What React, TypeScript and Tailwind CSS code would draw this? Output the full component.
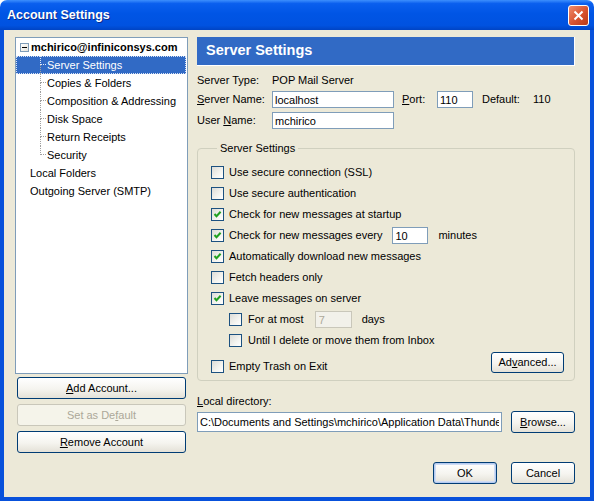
import React from 'react';

const treeChildren = [
  'Server Settings',
  'Copies & Folders',
  'Composition & Addressing',
  'Disk Space',
  'Return Receipts',
  'Security',
];

function Check({ checked }: { checked?: boolean }) {
  return (
    <span className="w-[13px] h-[13px] shrink-0 flex items-center justify-center border border-[#1c5180] bg-[linear-gradient(135deg,#dcdcd7,#f4f4f0_60%,#ffffff)]">
      {checked && (
        <svg width="9" height="9" viewBox="0 0 9 9">
          <path d="M1.5 4 L3.5 6.2 L7.6 1.8" stroke="#21a121" strokeWidth="2" fill="none" />
        </svg>
      )}
    </span>
  );
}

function CheckRow({ label, checked, indent }: { label: string; checked?: boolean; indent?: boolean }) {
  return (
    <div className={indent ? 'flex items-center h-[21px] gap-[6px] ml-[18px]' : 'flex items-center h-[21px] gap-[5px]'}>
      <Check checked={checked} />
      <span>{label}</span>
    </div>
  );
}

function XpButton({
  children,
  disabled,
  primary,
  className,
}: {
  children: React.ReactNode;
  disabled?: boolean;
  primary?: boolean;
  className?: string;
}) {
  if (disabled) {
    return (
      <div className={`flex items-center justify-center rounded-[3px] border border-[#c9c7ba] bg-[#f5f4ea] text-[#aca899] ${className ?? ''}`}>
        {children}
      </div>
    );
  }
  return (
    <div
      className={`flex items-center justify-center rounded-[3px] border border-[#003c74] bg-[linear-gradient(to_bottom,#ffffff,#f5f4ef_55%,#e4e1d7)] ${
        primary ? 'shadow-[inset_0_0_0_1px_#b5cbf0,inset_0_0_0_2px_#cfdcf4]' : ''
      } ${className ?? ''}`}
    >
      {children}
    </div>
  );
}

function TextBox({ value, className, disabled }: { value: string; className?: string; disabled?: boolean }) {
  return (
    <input
      readOnly
      value={value}
      className={
        disabled
          ? `border border-[#c9c7ba] bg-[#f2f1ea] text-[#aca899] px-[3px] outline-none ${className ?? ''}`
          : `border border-[#7f9db9] bg-white px-[2px] outline-none ${className ?? ''}`
      }
    />
  );
}

function TitleBar() {
  return (
    <div className="h-[30px] shrink-0 flex items-center justify-between rounded-t-[7px] bg-[linear-gradient(to_bottom,#3d8ffd_0%,#0a5fee_12%,#0055e5_45%,#0052e0_85%,#0044c4_100%)] pl-[7px] pr-[5px]">
      <span className="text-white font-bold text-[12.5px] pt-[1px] [text-shadow:1px_1px_0_#0a2a8a]">Account Settings</span>
      <div className="w-[21px] h-[21px] mt-[1px] rounded-[3px] border border-white flex items-center justify-center bg-[linear-gradient(135deg,#f08c6c,#d8532f_55%,#b93a18)]">
        <svg width="13" height="13" viewBox="0 0 13 13">
          <path d="M2.5 2.5 L10.5 10.5 M10.5 2.5 L2.5 10.5" stroke="white" strokeWidth="2" />
        </svg>
      </div>
    </div>
  );
}

function Tree() {
  return (
    <div className="h-[337px] border border-[#7f9db9] bg-white">
      <div className="flex h-[18px] items-center pl-[4px]">
        <span className="w-[9px] h-[9px] border border-[#7f9db9] bg-[linear-gradient(135deg,#ffffff,#e6e3da)] flex items-center justify-center">
          <span className="w-[5px] h-[1px] bg-black" />
        </span>
        <span className="ml-[2px] font-bold">mchirico@infiniconsys.com</span>
      </div>
      {treeChildren.map((label, i) => {
        const selected = i === 0;
        const last = i === treeChildren.length - 1;
        return (
          <div
            key={label}
            className={
              selected
                ? 'flex h-[18px] mr-[1px] bg-[#316ac5] text-white outline-1 outline-dotted outline-[#d8e2f4] -outline-offset-1'
                : 'flex h-[18px]'
            }
          >
            <div className="w-[24px] shrink-0" />
            <div className="w-[6px] shrink-0 flex flex-col">
              <div
                className={
                  selected
                    ? 'h-[9px] border-l border-b border-dotted border-[#e0e8f8]'
                    : 'h-[9px] border-l border-b border-dotted border-[#a0a0a0]'
                }
              />
              <div className={last ? 'flex-1' : 'flex-1 border-l border-dotted border-[#a0a0a0]'} />
            </div>
            <span className="self-center pl-[1px]">{label}</span>
          </div>
        );
      })}
      <div className="flex h-[18px] items-center pl-[14px]">Local Folders</div>
      <div className="flex h-[18px] items-center pl-[14px]">Outgoing Server (SMTP)</div>
    </div>
  );
}

export default function App() {
  return (
    <div className="w-[594px] h-[501px] flex flex-col font-['Liberation_Sans',Arial,sans-serif] text-[11px] text-black bg-white">
      <TitleBar />
      <div className="flex-1 flex bg-[#ece9d8] border-x-4 border-b-4 border-[#0851db] pt-[7px] pl-[11px]">
        {/* Left: account tree + buttons */}
        <div className="w-[173px] shrink-0 flex flex-col">
          <Tree />
          <div className="flex flex-col gap-[5px] mt-[3px] mx-[2px]">
            <XpButton className="h-[22px]">
              <span>
                <u>A</u>dd Account...
              </span>
            </XpButton>
            <XpButton className="h-[22px]" disabled>
              <span>
                Set as De<u>f</u>ault
              </span>
            </XpButton>
            <XpButton className="h-[22px]">
              <span>
                <u>R</u>emove Account
              </span>
            </XpButton>
          </div>
        </div>

        {/* Right: server settings panel */}
        <div className="w-[378px] shrink-0 ml-[9px] flex flex-col">
          <div className="h-[29px] flex items-center pl-[9px] bg-[#316ac5] border-r border-b border-white text-white font-bold text-[14.5px]">
            Server Settings
          </div>

          <div className="flex items-center h-[18px] mt-[5px]">
            <span className="w-[75px]">Server Type:</span>
            <span>POP Mail Server</span>
          </div>
          <div className="flex items-center h-[19px] mt-[1px]">
            <span className="w-[75px]">
              <u>S</u>erver Name:
            </span>
            <TextBox value="localhost" className="w-[122px] h-[17px]" />
            <span className="w-[35px] ml-[8px]">
              <u>P</u>ort:
            </span>
            <TextBox value="110" className="w-[36px] h-[17px]" />
            <span className="w-[51px] ml-[9px]">Default:</span>
            <span>110</span>
          </div>
          <div className="flex items-center h-[19px] mt-[2px]">
            <span className="w-[75px]">
              User <u>N</u>ame:
            </span>
            <TextBox value="mchirico" className="w-[122px] h-[17px]" />
          </div>

          <fieldset className="mt-[12px] border border-[#d0d0bf] rounded-[4px] pl-[13px] pr-[10px] pt-[7px] pb-[5px]">
            <legend className="ml-[6px] px-[3px] leading-[13px]">Server Settings</legend>
            <CheckRow label="Use secure connection (SSL)" />
            <CheckRow label="Use secure authentication" />
            <CheckRow label="Check for new messages at startup" checked />
            <div className="flex items-center h-[21px] gap-[5px]">
              <Check checked />
              <span>Check for new messages every</span>
              <TextBox value="10" className="w-[36px] h-[17px] ml-[5px]" />
              <span className="ml-[5px]">minutes</span>
            </div>
            <CheckRow label="Automatically download new messages" checked />
            <CheckRow label="Fetch headers only" />
            <CheckRow label="Leave messages on server" checked />
            <div className="flex items-center h-[21px] gap-[6px] ml-[18px]">
              <Check />
              <span>For at most</span>
              <TextBox value="7" disabled className="w-[37px] h-[17px] ml-[5px]" />
              <span className="ml-[4px]">days</span>
            </div>
            <CheckRow label="Until I delete or move them from Inbox" indent />
            <div className="flex items-end justify-between h-[24px]">
              <div className="flex items-center h-[17px] gap-[5px]">
                <Check />
                <span>Empty Trash on Exit</span>
              </div>
              <XpButton className="w-[73px] h-[21px] mb-[2px]">
                <span>
                  Ad<u>v</u>anced...
                </span>
              </XpButton>
            </div>
          </fieldset>

          <div className="mt-[14px] h-[13px] leading-[13px]">
            <u>L</u>ocal directory:
          </div>
          <div className="mt-[3px] flex items-center justify-between h-[22px]">
            <TextBox
              value="C:\Documents and Settings\mchirico\Application Data\Thunderbird\Profiles"
              className="w-[305px] h-[20px]"
            />
            <XpButton className="w-[64px] h-[22px]">
              <span>
                <u>B</u>rowse...
              </span>
            </XpButton>
          </div>

          <div className="mt-[29px] flex justify-end gap-[14px]">
            <XpButton primary className="w-[64px] h-[22px]">
              OK
            </XpButton>
            <XpButton className="w-[64px] h-[22px]">Cancel</XpButton>
          </div>
        </div>
      </div>
    </div>
  );
}
